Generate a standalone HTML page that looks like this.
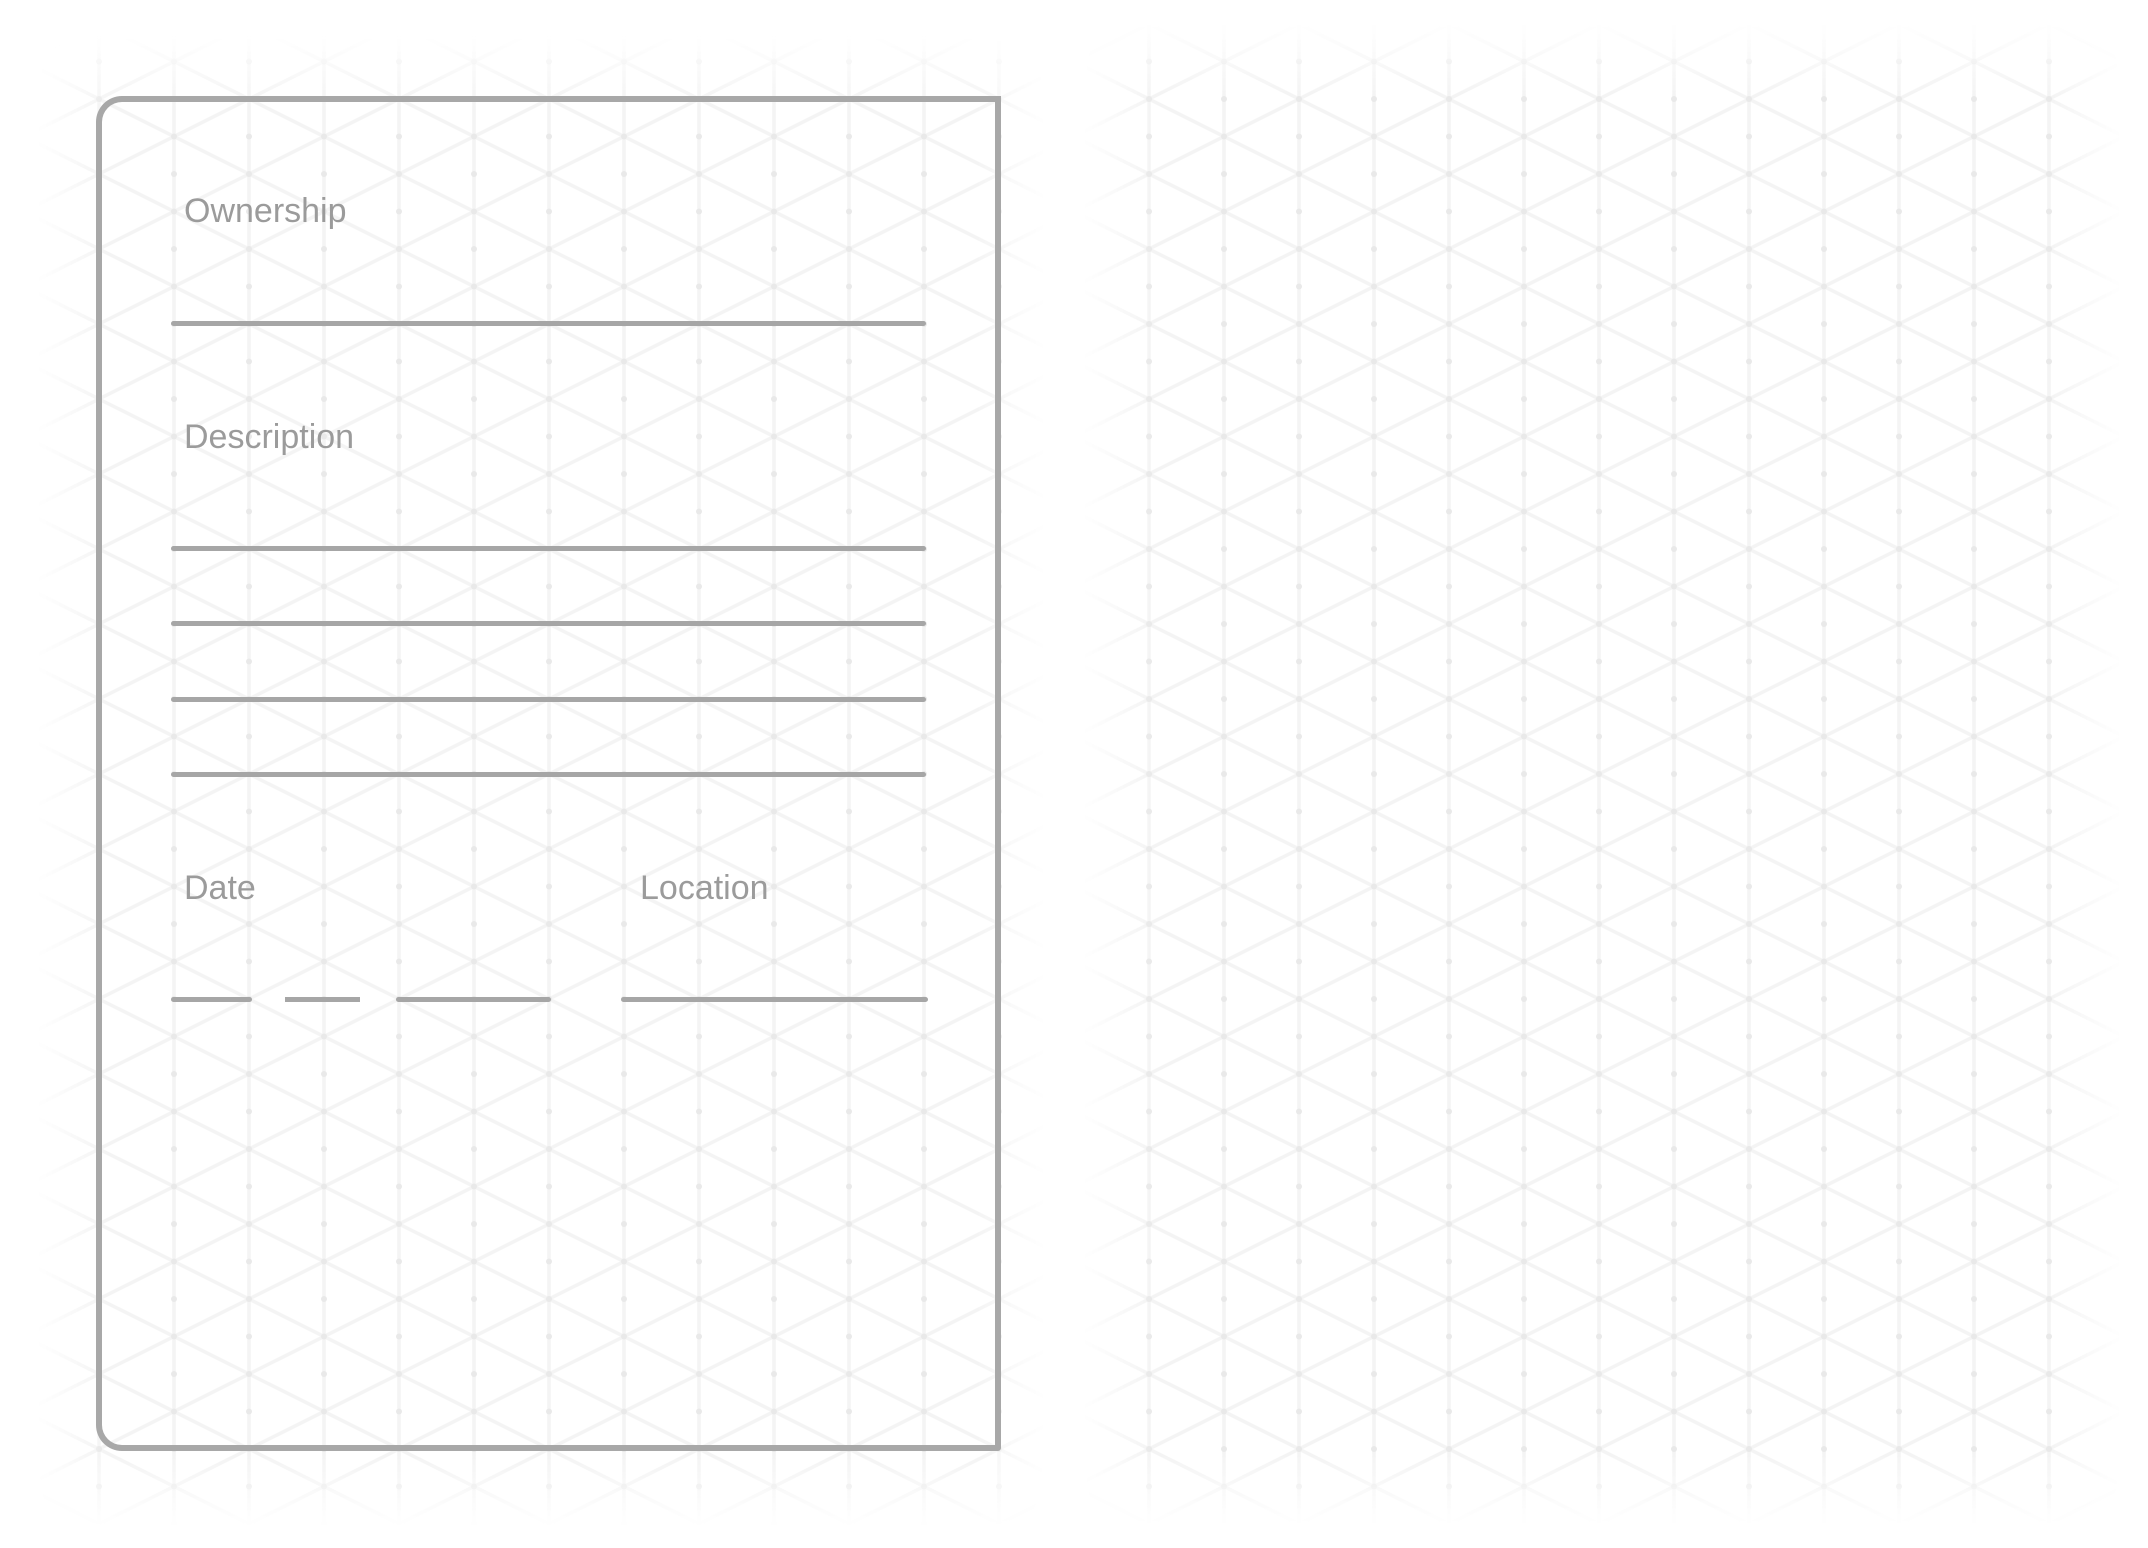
<!DOCTYPE html>
<html><head><meta charset="utf-8"><style>
html,body{margin:0;padding:0;background:#fff;width:2148px;height:1548px;overflow:hidden;position:relative}
.g{position:absolute;-webkit-mask-image:linear-gradient(to right,transparent 0,#000 70px,#000 calc(100% - 70px),transparent 100%),linear-gradient(to bottom,transparent 0,#000 70px,#000 calc(100% - 70px),transparent 100%);-webkit-mask-composite:source-in;mask-composite:intersect}
.t{position:absolute;font-family:"Gill Sans","Liberation Sans",sans-serif;font-size:34px;color:#9b9b9b;line-height:1}
.l{position:absolute;height:5px;background:#a6a6a6;border-radius:3px}
</style></head><body>
<svg width="0" height="0" style="position:absolute"><defs>
<pattern id="iso" patternUnits="userSpaceOnUse" width="150" height="75" x="99" y="24">
<g stroke="#f4f4f4" stroke-width="3.5" fill="none">
<line x1="0" y1="0" x2="0" y2="75"/><line x1="75" y1="0" x2="75" y2="75"/><line x1="150" y1="0" x2="150" y2="75"/>
<line x1="0" y1="0" x2="150" y2="75"/><line x1="0" y1="75" x2="150" y2="0"/>
<line x1="-150" y1="0" x2="0" y2="75"/><line x1="150" y1="0" x2="300" y2="75"/>
<line x1="0" y1="-75" x2="150" y2="0"/><line x1="0" y1="75" x2="150" y2="150"/>
<line x1="0" y1="0" x2="150" y2="-75"/><line x1="0" y1="150" x2="150" y2="75"/>
</g>
<g fill="#e9e9e9">
<circle cx="0" cy="0" r="3"/><circle cx="150" cy="0" r="3"/><circle cx="0" cy="75" r="3"/><circle cx="150" cy="75" r="3"/>
<circle cx="0" cy="37.5" r="3"/><circle cx="150" cy="37.5" r="3"/>
<circle cx="75" cy="0" r="3"/><circle cx="75" cy="75" r="3"/><circle cx="75" cy="37.5" r="3"/>
</g>
</pattern></defs></svg>
<div class="g" style="left:36px;top:36px;width:1010px;height:1490px"><svg width="1010" height="1490" viewBox="36 36 1010 1490"><rect x="0" y="0" width="2200" height="1600" fill="url(#iso)"/></svg></div>
<div class="g" style="left:1082px;top:24px;width:1040px;height:1500px"><svg width="1040" height="1500" viewBox="1082 24 1040 1500"><rect x="0" y="0" width="2200" height="1600" fill="url(#iso)"/></svg></div>
<div style="position:absolute;left:96px;top:96px;width:893px;height:1343px;border:6px solid #a8a8a8;border-radius:26px 0 3px 26px;box-sizing:content-box"></div>
<div class="t" style="left:184px;top:194px">Ownership</div>
<div class="l" style="left:171px;top:321px;width:755px"></div>
<div class="t" style="left:184px;top:420px">Description</div>
<div class="l" style="left:171px;top:546px;width:755px"></div>
<div class="l" style="left:171px;top:621px;width:755px"></div>
<div class="l" style="left:171px;top:697px;width:755px"></div>
<div class="l" style="left:171px;top:772px;width:755px"></div>
<div class="t" style="left:184px;top:871px">Date</div>
<div class="t" style="left:640px;top:871px">Location</div>
<div class="l" style="left:171px;top:997px;width:81px"></div>
<div class="l" style="left:285px;top:997px;width:75px;border-radius:0"></div>
<div class="l" style="left:396px;top:997px;width:155px"></div>
<div class="l" style="left:621px;top:997px;width:307px"></div>
</body></html>
